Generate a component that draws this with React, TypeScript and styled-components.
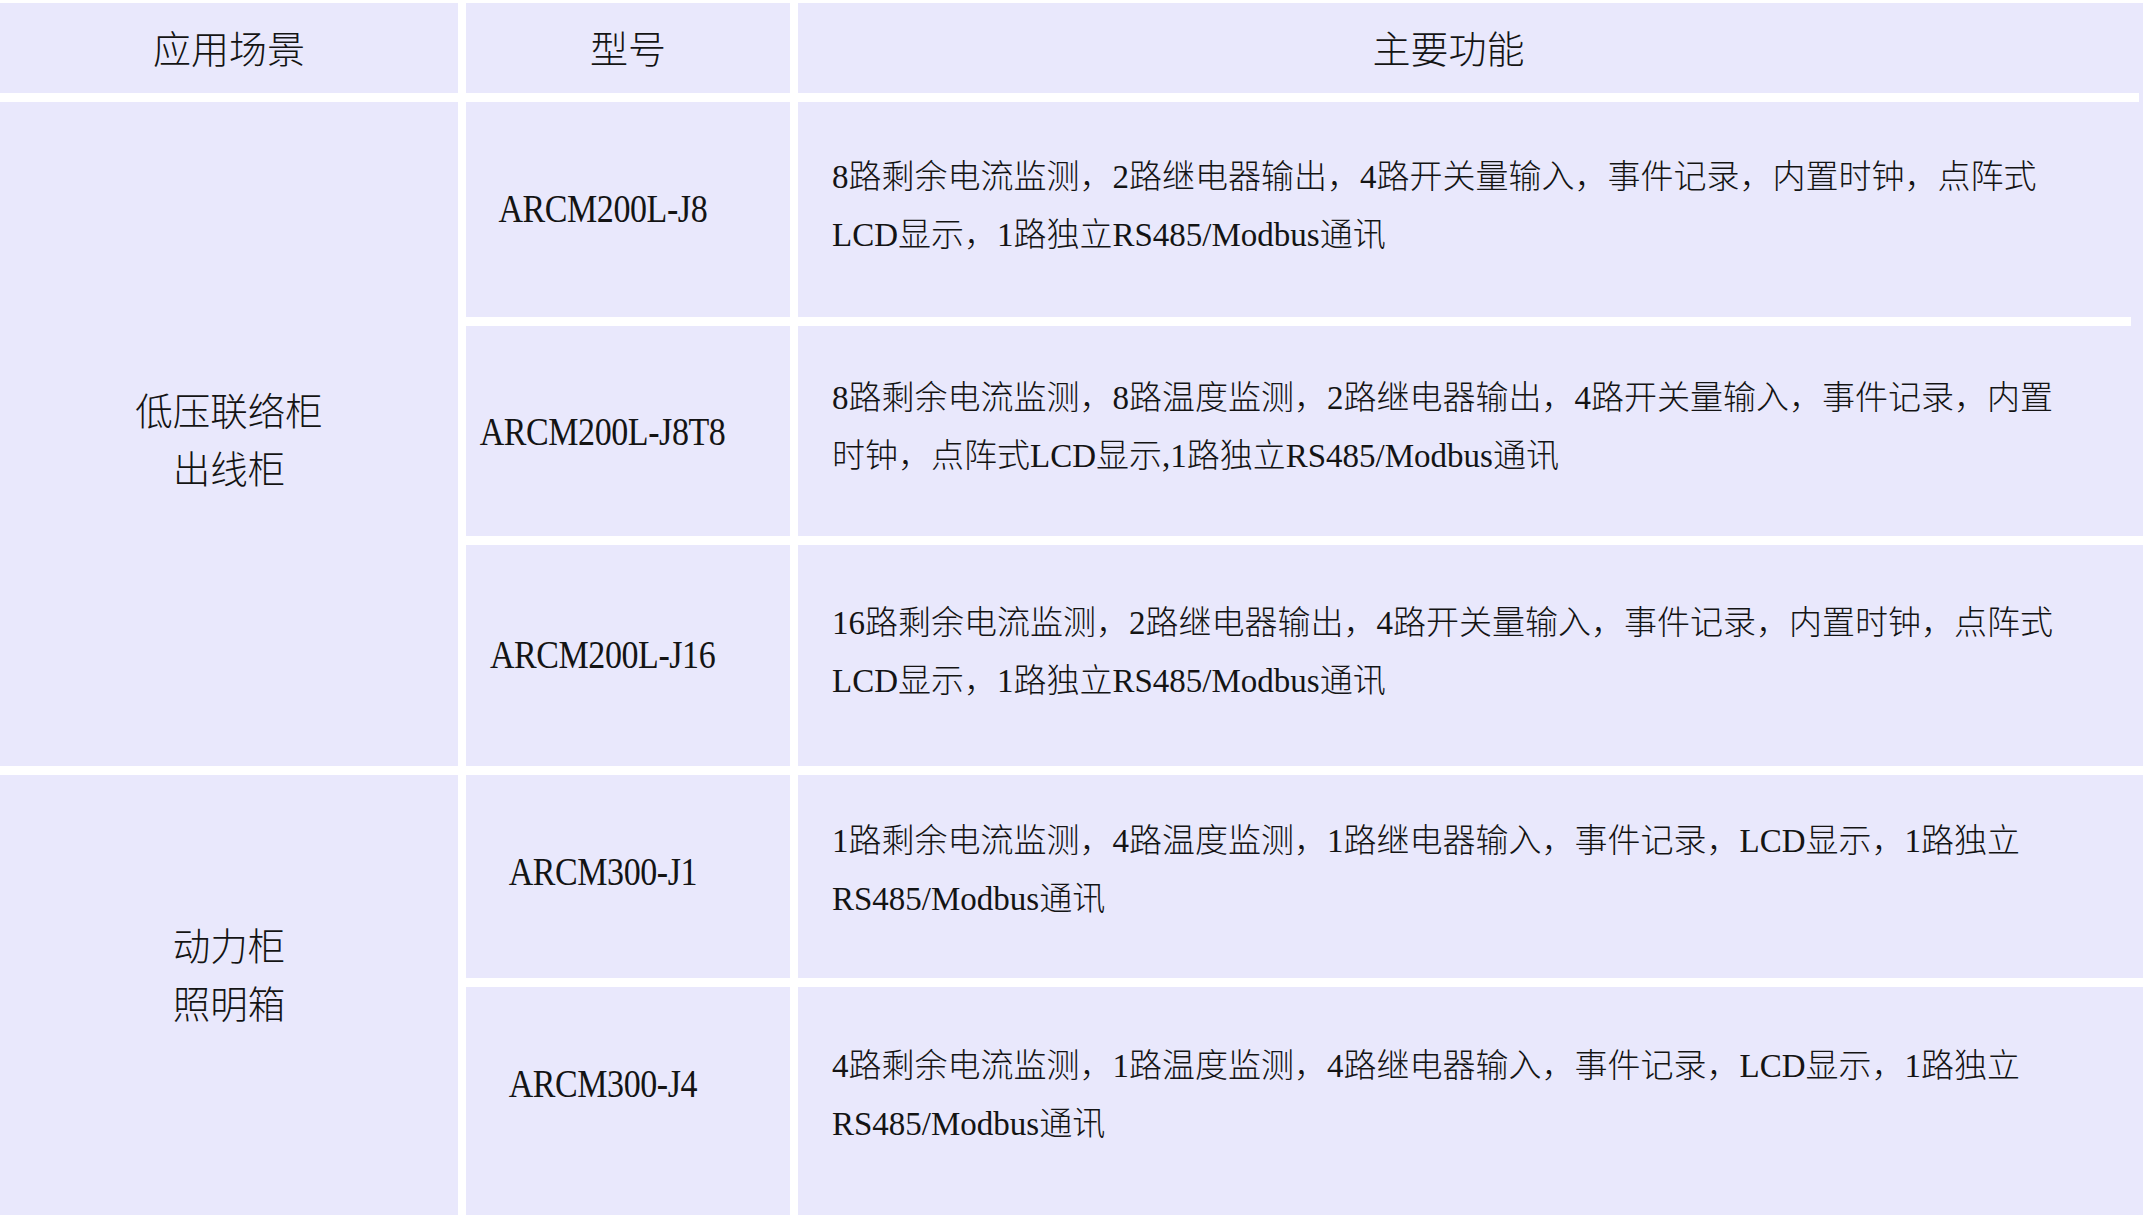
import React from "react";
import styled, { createGlobalStyle } from "styled-components";

const GlobalStyle = createGlobalStyle`
  html, body {
    margin: 0;
    padding: 0;
    background: #ffffff;
  }
  body {
    font-family: "Liberation Serif", "Noto Sans CJK SC", serif;
    color: #141414;
  }
`;

const LAVENDER = "#e9e8fc";

const Table = styled.div`
  display: grid;
  grid-template-columns: 458px 324px 1345px;
  grid-template-rows: 90px 215px 210px 221px 203px 229px;
  column-gap: 8px;
  row-gap: 9px;
  padding-top: 3px;
  width: 2143px;
`;

const Cell = styled.div<{ $rows?: number; $bridge?: number; $lift?: number }>`
  position: relative;
  background: ${LAVENDER};
  display: flex;
  flex-direction: column;
  justify-content: center;
  box-sizing: border-box;
  grid-row: ${({ $rows }) => ($rows ? `span ${$rows}` : "auto")};
  padding-bottom: ${({ $lift }) => ($lift && $lift > 0 ? $lift : 0)}px;
  padding-top: ${({ $lift }) => ($lift && $lift < 0 ? -$lift : 0)}px;

  ${({ $bridge }) =>
    $bridge &&
    `
    &::after {
      content: "";
      position: absolute;
      right: 0;
      bottom: -9px;
      width: ${$bridge}px;
      height: 9px;
      background: ${LAVENDER};
    }
  `}
`;

const HeadCell = styled(Cell)<{ $shift?: number }>`
  align-items: center;
  padding-right: ${({ $shift }) => $shift || 0}px;
  font-family: "Noto Sans CJK SC", sans-serif;
  font-weight: 300;
  font-size: 38px;
`;

const SceneCell = styled(Cell)`
  align-items: center;
  font-family: "Noto Sans CJK SC", sans-serif;
  font-weight: 300;
  font-size: 37.5px;
  line-height: 58px;
  text-align: center;
`;

const ModelCell = styled(Cell)`
  align-items: center;
  padding-right: 50px;
`;

const ModelText = styled.span`
  display: inline-block;
  font-family: "Liberation Serif", serif;
  font-size: 40px;
  letter-spacing: -0.5px;
  transform: scaleX(0.85);
  white-space: nowrap;
`;

const FuncCell = styled(Cell)`
  align-items: flex-start;
  padding-left: 34px;
  font-family: "Liberation Serif", "Noto Sans CJK SC", serif;
  font-weight: 300;
  font-size: 33px;
  line-height: 58px;
`;

const Line = styled.span`
  display: block;
  white-space: nowrap;
`;

type Item = {
  model: string;
  lines: string[];
  bridge?: number;
  modelLift?: number;
  textLift?: number;
};

type Group = {
  scene: string[];
  sceneLift: number;
  items: Item[];
};

const groups: Group[] = [
  {
    scene: ["低压联络柜", "出线柜"],
    sceneLift: -8,
    items: [
      {
        model: "ARCM200L-J8",
        bridge: 12,
        textLift: 8,
        modelLift: 2,
        lines: [
          "8路剩余电流监测，2路继电器输出，4路开关量输入，事件记录，内置时钟，点阵式",
          "LCD显示，1路独立RS485/Modbus通讯",
        ],
      },
      {
        model: "ARCM200L-J8T8",
        textLift: 8,
        lines: [
          "8路剩余电流监测，8路温度监测，2路继电器输出，4路开关量输入，事件记录，内置",
          "时钟，点阵式LCD显示,1路独立RS485/Modbus通讯",
        ],
      },
      {
        model: "ARCM200L-J16",
        textLift: 8,
        modelLift: 2,
        lines: [
          "16路剩余电流监测，2路继电器输出，4路开关量输入，事件记录，内置时钟，点阵式",
          "LCD显示，1路独立RS485/Modbus通讯",
        ],
      },
    ],
  },
  {
    scene: ["动力柜", "照明箱"],
    sceneLift: 46,
    items: [
      {
        model: "ARCM300-J1",
        textLift: 14,
        modelLift: 10,
        lines: [
          "1路剩余电流监测，4路温度监测，1路继电器输入，事件记录，LCD显示，1路独立",
          "RS485/Modbus通讯",
        ],
      },
      {
        model: "ARCM300-J4",
        textLift: 14,
        modelLift: 36,
        lines: [
          "4路剩余电流监测，1路温度监测，4路继电器输入，事件记录，LCD显示，1路独立",
          "RS485/Modbus通讯",
        ],
      },
    ],
  },
];

export default function App() {
  return (
    <>
      <GlobalStyle />
      <Table>
        <HeadCell $lift={4}>应用场景</HeadCell>
        <HeadCell $lift={4}>型号</HeadCell>
        <HeadCell $lift={4} $shift={44} $bridge={4}>
          主要功能
        </HeadCell>

        {groups.map((group) => (
          <React.Fragment key={group.scene.join("")}>
            {group.items.map((item, i) => (
              <React.Fragment key={item.model}>
                {i === 0 && (
                  <SceneCell $rows={group.items.length} $lift={group.sceneLift}>
                    {group.scene.map((s) => (
                      <Line key={s}>{s}</Line>
                    ))}
                  </SceneCell>
                )}
                <ModelCell $lift={item.modelLift}>
                  <ModelText>{item.model}</ModelText>
                </ModelCell>
                <FuncCell $bridge={item.bridge} $lift={item.textLift}>
                  {item.lines.map((l) => (
                    <Line key={l}>{l}</Line>
                  ))}
                </FuncCell>
              </React.Fragment>
            ))}
          </React.Fragment>
        ))}
      </Table>
    </>
  );
}
